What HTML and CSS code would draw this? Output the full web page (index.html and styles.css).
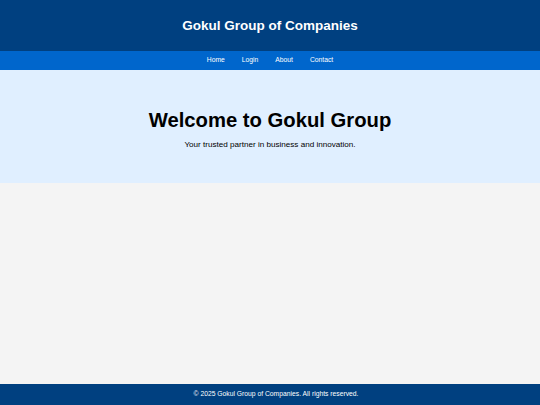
FILE: index.html
```html
<!DOCTYPE html>
<html lang="en">
<head>
<meta charset="utf-8">
<title>Gokul Group of Companies</title>
<link rel="stylesheet" href="styles.css">
</head>
<body>
<header class="site-header">
  <h1 class="site-title">Gokul Group of Companies</h1>
</header>
<nav class="site-nav">
  <a href="#">Home</a>
  <a href="#">Login</a>
  <a href="#">About</a>
  <a href="#">Contact</a>
</nav>
<section class="hero">
  <h2 class="hero-title">Welcome to Gokul Group</h2>
  <p class="hero-sub">Your trusted partner in business and innovation.</p>
</section>
<main class="content"></main>
<footer class="site-footer">
  <p>&copy; 2025 Gokul Group of Companies. All rights reserved.</p>
</footer>
</body>
</html>
```

FILE: styles.css
```css
* { box-sizing: border-box; }
html, body { margin: 0; padding: 0; height: 100%; }
body {
  font-family: "Liberation Sans", Arial, sans-serif;
  background: #f4f4f4;
  color: #000;
  display: flex;
  flex-direction: column;
  min-height: 100vh;
}
.site-header {
  background: #004080;
  height: 51px;
  display: flex;
  align-items: center;
  justify-content: center;
}
.site-title {
  margin: 0;
  color: #fff;
  font-size: 13.5px;
  font-weight: bold;
  line-height: 1;
}
.site-nav {
  background: #0066cc;
  height: 19px;
  display: flex;
  align-items: center;
  justify-content: center;
  gap: 17px;
}
.site-nav a {
  color: #fff;
  text-decoration: none;
  font-size: 6.75px;
  line-height: 1;
}
.hero {
  background: #e0efff;
  height: 113px;
  padding-top: 39px;
  text-align: center;
}
.hero-title {
  margin: 0;
  font-size: 20.25px;
  line-height: 23px;
  font-weight: bold;
  color: #000;
}
.hero-sub {
  margin: 7px 0 0;
  font-size: 8.1px;
  line-height: 11px;
  color: #000;
}
.content { flex: 1; }
.site-footer {
  background: #004080;
  height: 21px;
  padding-left: 12px;
  display: flex;
  align-items: center;
  justify-content: center;
}
.site-footer p {
  margin: 0;
  color: #fff;
  font-size: 6.75px;
  line-height: 1;
}
```
